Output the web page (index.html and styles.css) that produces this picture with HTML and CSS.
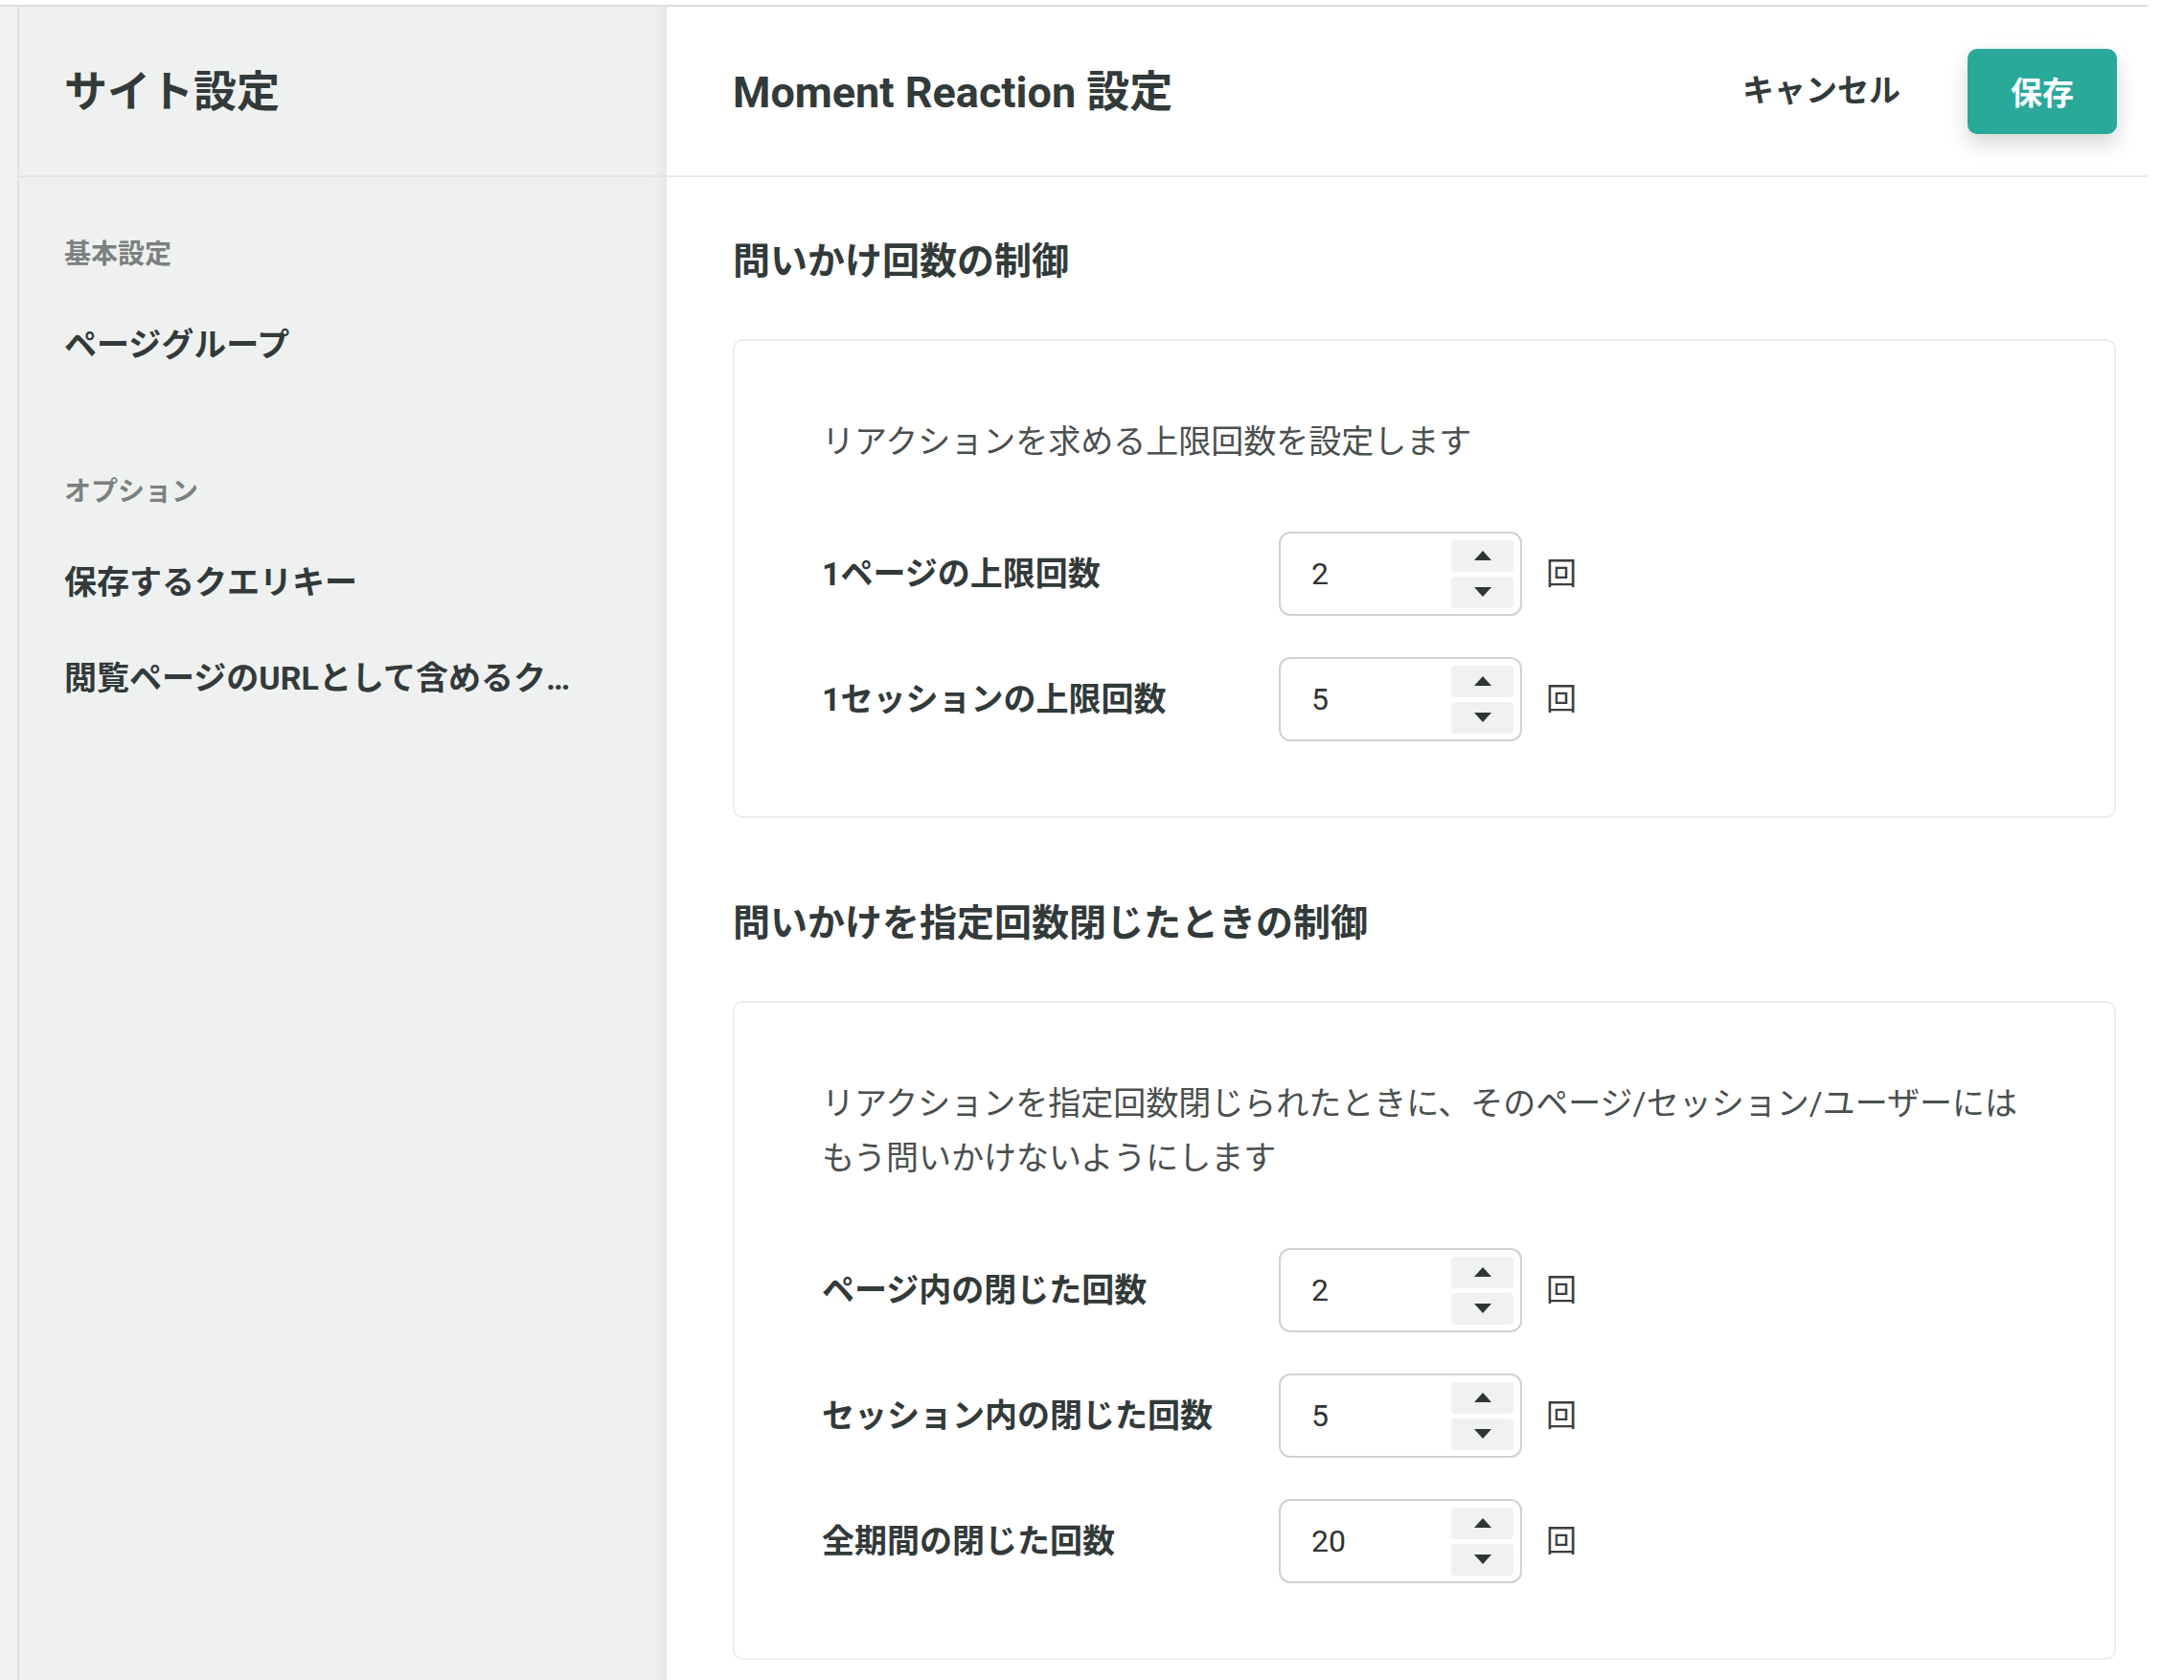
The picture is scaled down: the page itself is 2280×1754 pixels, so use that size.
FILE: index.html
```html
<html>
    <head>
        <meta charset="utf-8">
        <title>サイト設定 - Moment Reaction 設定</title>
        <link rel="stylesheet" href="styles.css">
    </head>
    <body>
        <div class="app">
            <div class="rail"></div>
            <div class="sidebar">
                <div class="sidebar-head">
                    <h1>サイト設定</h1>
                </div>
                <div class="nav">
                    <div class="nav-group">
                        <div class="nav-label">基本設定</div>
                        <div class="nav-item">ページグループ</div>
                    </div>
                    <div class="nav-group">
                        <div class="nav-label">オプション</div>
                        <div class="nav-item">保存するクエリキー</div>
                        <div class="nav-item">閲覧ページのURLとして含めるクエリキー</div>
                    </div>
                </div>
            </div>
            <div class="main">
                <div class="main-head">
                    <h2>Moment Reaction 設定</h2>
                    <span class="cancel">キャンセル</span>
                    <button class="save">保存</button>
                </div>
                <div class="content">
                    <div class="section">
                        <h3>問いかけ回数の制御</h3>
                        <div class="card">
                            <p class="desc">リアクションを求める上限回数を設定します</p>
                            <div class="field-row">
                                <label class="field-label">1ページの上限回数</label>
                                <div class="num-field">
                                    <input class="num-input" type="text" value="2">
                                    <div class="stepper">
                                        <button class="step"><svg width="18" height="10" viewBox="0 0 18 10"><path d="M0 10 L9 0 L18 10 Z"/></svg></button>
                                        <button class="step"><svg width="18" height="10" viewBox="0 0 18 10"><path d="M0 0 L9 10 L18 0 Z"/></svg></button>
                                    </div>
                                </div>
                                <span class="unit">回</span>
                            </div>
                            <div class="field-row">
                                <label class="field-label">1セッションの上限回数</label>
                                <div class="num-field">
                                    <input class="num-input" type="text" value="5">
                                    <div class="stepper">
                                        <button class="step"><svg width="18" height="10" viewBox="0 0 18 10"><path d="M0 10 L9 0 L18 10 Z"/></svg></button>
                                        <button class="step"><svg width="18" height="10" viewBox="0 0 18 10"><path d="M0 0 L9 10 L18 0 Z"/></svg></button>
                                    </div>
                                </div>
                                <span class="unit">回</span>
                            </div>
                        </div>
                    </div>
                    <div class="section">
                        <h3>問いかけを指定回数閉じたときの制御</h3>
                        <div class="card">
                            <p class="desc">リアクションを指定回数閉じられたときに、そのページ/セッション/ユーザーには<br>もう問いかけないようにします</p>
                            <div class="field-row">
                                <label class="field-label">ページ内の閉じた回数</label>
                                <div class="num-field">
                                    <input class="num-input" type="text" value="2">
                                    <div class="stepper">
                                        <button class="step"><svg width="18" height="10" viewBox="0 0 18 10"><path d="M0 10 L9 0 L18 10 Z"/></svg></button>
                                        <button class="step"><svg width="18" height="10" viewBox="0 0 18 10"><path d="M0 0 L9 10 L18 0 Z"/></svg></button>
                                    </div>
                                </div>
                                <span class="unit">回</span>
                            </div>
                            <div class="field-row">
                                <label class="field-label">セッション内の閉じた回数</label>
                                <div class="num-field">
                                    <input class="num-input" type="text" value="5">
                                    <div class="stepper">
                                        <button class="step"><svg width="18" height="10" viewBox="0 0 18 10"><path d="M0 10 L9 0 L18 10 Z"/></svg></button>
                                        <button class="step"><svg width="18" height="10" viewBox="0 0 18 10"><path d="M0 0 L9 10 L18 0 Z"/></svg></button>
                                    </div>
                                </div>
                                <span class="unit">回</span>
                            </div>
                            <div class="field-row">
                                <label class="field-label">全期間の閉じた回数</label>
                                <div class="num-field">
                                    <input class="num-input" type="text" value="20">
                                    <div class="stepper">
                                        <button class="step"><svg width="18" height="10" viewBox="0 0 18 10"><path d="M0 10 L9 0 L18 10 Z"/></svg></button>
                                        <button class="step"><svg width="18" height="10" viewBox="0 0 18 10"><path d="M0 0 L9 10 L18 0 Z"/></svg></button>
                                    </div>
                                </div>
                                <span class="unit">回</span>
                            </div>
                        </div>
                    </div>
                </div>
            </div>
        </div>
    </body>
</html>
```

FILE: styles.css
```css
body {
    margin: 0;
    background-color: #fff;
    color: #323a3a;
    font-family: Roboto, "Noto Sans CJK JP", sans-serif;
}
.app {
    display: flex;
    width: 2242px;
    height: 1747px;
    margin-top: 5px;
    border-top: 2px solid #dcdedd;
    overflow: hidden;
}
.rail {
    width: 18px;
    background-color: #f1f3f2;
    border-right: 2px solid #e1e3e2;
}

/* sidebar */
.sidebar {
    width: 676px;
    flex-shrink: 0;
    background-color: #eff1f0;
    box-shadow: inset -16px 0 16px -14px rgba(0, 0, 0, 0.07);
}
.sidebar-head {
    display: flex;
    align-items: center;
    height: 170px;
    padding: 0 0 6px 47px;
    border-bottom: 2px solid #e3e5e4;
}
.sidebar-head h1 {
    margin: 0;
    font-size: 45px;
    font-weight: 700;
}
.nav {
    padding: 61px 77px 0 47px;
}
.nav-group + .nav-group {
    margin-top: 83px;
}
.nav-label {
    margin-bottom: 25px;
    font-size: 28px;
    line-height: 40px;
    font-weight: 700;
    color: #7b8080;
}
.nav-item {
    padding: 24px 0 26px;
    font-size: 34px;
    line-height: 50px;
    font-weight: 700;
    white-space: nowrap;
    overflow: hidden;
    text-overflow: ellipsis;
}

/* main pane */
.main {
    flex: 1;
    min-width: 0;
}
.main-head {
    display: flex;
    align-items: center;
    height: 170px;
    padding: 0 32px 6px 69px;
    border-bottom: 2px solid #e8eaea;
}
.main-head h2 {
    flex: 1;
    margin: 0;
    font-size: 45px;
    font-weight: 700;
}
.cancel {
    margin-right: 70px;
    font-size: 33px;
    font-weight: 700;
}
.save {
    height: 89px;
    margin-top: 6px;
    padding: 0 45px;
    border: none;
    border-radius: 10px;
    background-color: #2aa99b;
    color: #fff;
    font-family: inherit;
    font-size: 33px;
    font-weight: 700;
    box-shadow: 0 10px 22px rgba(0, 0, 0, 0.16);
}
.content {
    padding: 60px 33px 0 69px;
}
.section {
    margin-bottom: 82px;
}
.section h3 {
    margin: 0 0 52px;
    font-size: 39px;
    line-height: 57px;
    font-weight: 700;
}
.card {
    padding: 77px 91px 78px;
    border: 2px solid #ededed;
    border-radius: 10px;
}
.desc {
    margin: 0 0 65px;
    font-size: 34px;
    line-height: 57px;
    color: #4a4f4f;
}
.field-row {
    display: flex;
    align-items: center;
    height: 88px;
}
.field-row + .field-row {
    margin-top: 43px;
}
.field-label {
    width: 477px;
    padding-bottom: 6px;
    font-size: 34px;
    font-weight: 700;
}
.num-field {
    display: flex;
    align-items: center;
    box-sizing: border-box;
    width: 254px;
    height: 88px;
    padding: 0 7px 0 32px;
    border: 2px solid #cfd2d1;
    border-radius: 12px;
}
.num-input {
    flex: 1;
    min-width: 0;
    padding: 0;
    border: none;
    outline: none;
    background: transparent;
    color: #333;
    font-family: inherit;
    font-size: 32px;
}
.stepper {
    display: flex;
    flex-direction: column;
    gap: 5px;
}
.step {
    display: flex;
    align-items: center;
    justify-content: center;
    width: 65px;
    height: 33px;
    padding: 0;
    border: none;
    border-radius: 4px;
    background-color: #f0f1f1;
}
.step svg {
    fill: #2f3535;
}
.unit {
    margin-left: 25px;
    padding-bottom: 6px;
    font-size: 32px;
    color: #3a3f3f;
}
```
